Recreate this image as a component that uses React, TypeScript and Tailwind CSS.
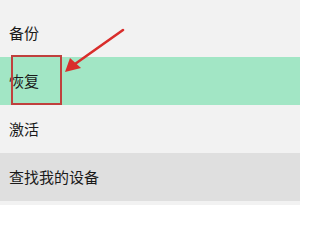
export default function App() {
  const rows = [
    { label: '备份', bg: 'bg-[#f2f2f2]' },
    { label: '恢复', bg: 'bg-[#a2e6c5]' },
    { label: '激活', bg: 'bg-[#f2f2f2]' },
    { label: '查找我的设备', bg: 'bg-[#dfdfdf]' },
  ];

  return (
    <div
      className="relative w-[300px] h-[205px] overflow-hidden bg-[#f2f2f2] pt-[9px]"
      style={{ fontFamily: '"Noto Sans CJK SC", "Noto Sans", sans-serif' }}
    >
      {/* Settings list */}
      <div className="flex flex-col">
        {rows.map((r) => (
          <div key={r.label} className={`h-[48px] flex items-center pl-[9px] text-[15px] text-[#1a1a1a] ${r.bg}`}>
            {r.label}
          </div>
        ))}
      </div>

      {/* Annotation box */}
      <div className="absolute left-[11px] top-[55px] w-[51px] h-[50px] border-2 border-[#c0403d]" />

      {/* Annotation arrow */}
      <svg className="absolute left-0 top-0" width="300" height="205" viewBox="0 0 300 205">
        <line x1="123" y1="30" x2="75" y2="64" stroke="#d92d2b" strokeWidth="2.6" strokeLinecap="round" />
        <polygon points="65,72 70,58 81,68" fill="#d92d2b" />
      </svg>
    </div>
  );
}
